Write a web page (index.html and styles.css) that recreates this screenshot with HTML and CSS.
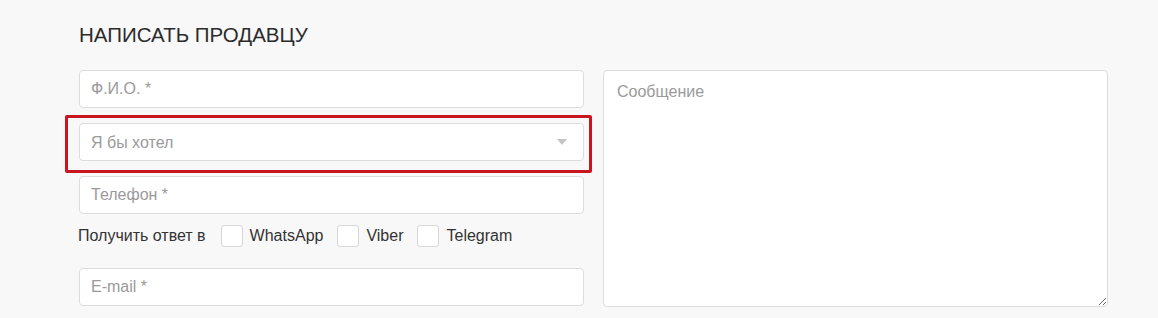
FILE: index.html
```html
<!DOCTYPE html>
<html lang="ru">
<head>
    <meta charset="UTF-8">
    <meta name="viewport" content="width=device-width, initial-scale=1.0">
    <title>Написать продавцу</title>
    <link rel="stylesheet" href="styles.css">
</head>
<body>
    <div class="seller-form">
        <h2 class="form-title">НАПИСАТЬ ПРОДАВЦУ</h2>

        <div class="form-grid">
            <div class="form-left">
                <input type="text" class="field" placeholder="Ф.И.О. *">

                <div class="select-wrap highlighted">
                    <select class="field field-select">
                        <option>Я бы хотел</option>
                    </select>
                </div>

                <input type="tel" class="field" placeholder="Телефон *">

                <div class="messengers">
                    <span class="messengers-label">Получить ответ в</span>
                    <label class="check"><input type="checkbox"><span class="box"></span>WhatsApp</label>
                    <label class="check"><input type="checkbox"><span class="box"></span>Viber</label>
                    <label class="check"><input type="checkbox"><span class="box"></span>Telegram</label>
                </div>

                <input type="email" class="field field-email" placeholder="E-mail *">
            </div>

            <div class="form-right">
                <textarea class="field field-message" placeholder="Сообщение"></textarea>
            </div>
        </div>
    </div>
</body>
</html>
```

FILE: styles.css
```css
body {
    margin: 0;
    padding: 0;
    background: #f8f8f8;
    font-family: "Liberation Sans", Arial, sans-serif;
    color: #333;
}

.seller-form {
    padding: 23px 50px 0 79px;
}

.form-title {
    margin: 0 0 24px 0;
    font-size: 20.5px;
    font-weight: normal;
    line-height: 23px;
    color: #2b2b2b;
}

.form-grid {
    display: grid;
    grid-template-columns: 505px 505px;
    column-gap: 19px;
}

.form-left {
    display: flex;
    flex-direction: column;
}

.field {
    box-sizing: border-box;
    width: 100%;
    height: 38px;
    margin: 0 0 15px 0;
    padding: 0 11px;
    border: 1px solid #dcdcdc;
    border-radius: 4px;
    background: #fff;
    font-family: "Liberation Sans", Arial, sans-serif;
    font-size: 16px;
    color: #333;
    outline: none;
}

.field::placeholder {
    color: #9a9a9a;
}

.select-wrap {
    position: relative;
}

.field-select {
    appearance: none;
    -webkit-appearance: none;
    color: #9a9a9a;
}

.select-wrap::after {
    content: "";
    position: absolute;
    top: 16px;
    right: 17px;
    border-left: 5px solid transparent;
    border-right: 5px solid transparent;
    border-top: 6px solid #c4c4c4;
}

/* red annotation frame around the select */
.highlighted::before {
    content: "";
    position: absolute;
    top: -8px;
    left: -14px;
    right: -8px;
    bottom: 3px;
    border: 3px solid #c9161e;
    border-radius: 2px;
    pointer-events: none;
}

.messengers {
    display: flex;
    align-items: center;
    height: 22px;
    margin: -4px 0 21px 0;
    font-size: 16px;
    color: #333;
}

.messengers-label {
    margin-right: 15px;
    margin-left: -1px;
}

.check {
    display: flex;
    align-items: center;
    margin-right: 14px;
    cursor: pointer;
}

.check input {
    display: none;
}

.check .box {
    box-sizing: border-box;
    width: 22px;
    height: 22px;
    margin-right: 7px;
    border: 1px solid #d6d6d6;
    border-radius: 3px;
    background: #fff;
}

.field-email {
    margin-bottom: 0;
}

.form-right {
    display: flex;
}

.field-message {
    height: 237px;
    margin: 0;
    padding: 12px 13px;
    resize: vertical;
    line-height: 18px;
}
```
